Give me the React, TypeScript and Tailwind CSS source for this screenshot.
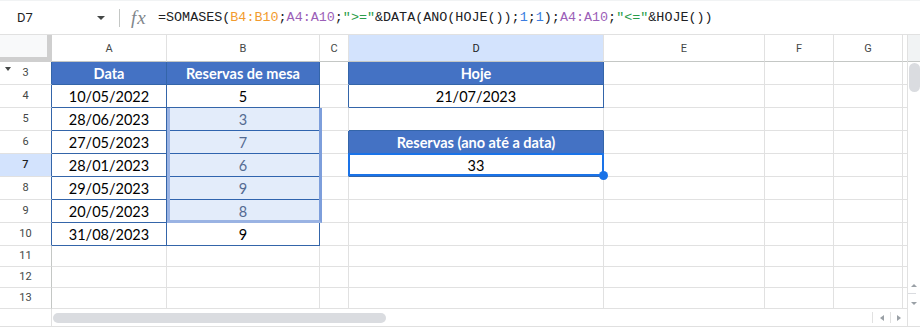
import React from "react";

const base = "flex items-center justify-center whitespace-nowrap overflow-hidden";
const TH = `${base} bg-[#4472c4] border-r border-b border-[#3465a9] text-white font-bold text-[14.5px] font-[Lato,sans-serif] pt-[2px]`;
const TD = `${base} bg-white border-r border-b border-[#3465a9] text-black text-[14.5px] font-[Lato,sans-serif] pt-[2px]`;
const TS = `${base} bg-white border-r border-b border-[#3465a9] text-[#5d6c88] text-[14.5px] font-[Lato,sans-serif] pt-[2px]`;
const G = "border-r border-b border-[#e1e1e1]";
const GR = "border-r border-b border-r-[#3465a9] border-b-[#e1e1e1]";
const GB = "border-r border-b border-r-[#e1e1e1] border-b-[#3465a9]";
const X = "border-b border-[#e1e1e1]";
const RH = `${base} relative bg-white border-r border-b border-r-[#3465a9] border-b-[#e1e1e1] text-[11px] text-[#444746] font-[Roboto,sans-serif]`;
const RHsel = `${base} bg-[#d3e3fd] border-r border-b border-r-[#3465a9] border-b-[#e1e1e1] text-[11px] text-[#1f1f1f] font-medium font-[Roboto,sans-serif]`;
const RHg = `${base} bg-white border-r border-b border-r-[#c4c7c5] border-b-[#e1e1e1] text-[11px] text-[#444746] font-[Roboto,sans-serif]`;
const CH = `${base} bg-white border-r border-b border-r-[#e1e1e1] border-b-[#c4c7c5] text-[11px] text-[#444746] font-[Roboto,sans-serif] pt-[2px]`;
const CHsel = `${base} bg-[#d3e3fd] border-r border-b border-r-[#e1e1e1] border-b-[#c4c7c5] text-[11px] text-[#1f1f1f] font-[Roboto,sans-serif] pt-[2px]`;

type Row = [string, React.ReactNode][];

const rows: Row[] = [
  [
    ["bg-[#f8f9fa] border-r-[5px] border-b-[5px] border-[#cfcfcf]", null],
    [CH, "A"],
    [CH, "B"],
    [CH, "C"],
    [CHsel, "D"],
    [CH, "E"],
    [CH, "F"],
    [CH, "G"],
    ["bg-white border-b border-[#c4c7c5]", null],
  ],
  [
    [
      RH,
      <>
        <svg className="absolute left-[5px] top-[5px]" width="6" height="4" viewBox="0 0 6 4">
          <polygon points="0,0 6,0 3,4" fill="#444746" />
        </svg>
        3
      </>,
    ],
    [TH, "Data"],
    [TH, "Reservas de mesa"],
    [GR, null],
    [TH, "Hoje"],
    [G, null],
    [G, null],
    [G, null],
    [X, null],
  ],
  [
    [RH, "4"],
    [TD, "10/05/2022"],
    [TD, "5"],
    [GR, null],
    [TD, "21/07/2023"],
    [G, null],
    [G, null],
    [G, null],
    [X, null],
  ],
  [
    [RH, "5"],
    [TD, "28/06/2023"],
    [TS, "3"],
    [G, null],
    [GB, null],
    [G, null],
    [G, null],
    [G, null],
    [X, null],
  ],
  [
    [RH, "6"],
    [TD, "27/05/2023"],
    [TS, "7"],
    [GR, null],
    [TH, "Reservas (ano até a data)"],
    [G, null],
    [G, null],
    [G, null],
    [X, null],
  ],
  [
    [RHsel, "7"],
    [TD, "28/01/2023"],
    [TS, "6"],
    [GR, null],
    [TD, "33"],
    [G, null],
    [G, null],
    [G, null],
    [X, null],
  ],
  [
    [RH, "8"],
    [TD, "29/05/2023"],
    [TS, "9"],
    [G, null],
    [G, null],
    [G, null],
    [G, null],
    [G, null],
    [X, null],
  ],
  [
    [RH, "9"],
    [TD, "20/05/2023"],
    [TS, "8"],
    [G, null],
    [G, null],
    [G, null],
    [G, null],
    [G, null],
    [X, null],
  ],
  [
    [RH, "10"],
    [TD, "31/08/2023"],
    [TD, "9"],
    [G, null],
    [G, null],
    [G, null],
    [G, null],
    [G, null],
    [X, null],
  ],
  ...["11", "12", "13"].map(
    (n): Row => [
      [RHg, n],
      [G, null],
      [G, null],
      [G, null],
      [G, null],
      [G, null],
      [G, null],
      [G, null],
      [X, null],
    ]
  ),
];

function FormulaBar() {
  return (
    <div className="h-[35px] flex items-center border-t border-t-[#f1f3f4] border-b border-b-[#e1e1e1] bg-white">
      <div className="w-[119px] h-full flex items-center justify-between pl-[17px] pr-[14px] pt-[1px]">
        <span className="text-[13px] text-[#1f1f1f] font-[Roboto,sans-serif]">D7</span>
        <svg width="8" height="4" viewBox="0 0 8 4">
          <polygon points="0,0 8,0 4,4" fill="#444746" />
        </svg>
      </div>
      <div className="w-px h-[18px] bg-[#c4c7c5]" />
      <span className="ml-[11px] w-[17px] text-[19px] leading-none italic text-[#80868b] font-['Liberation_Serif',serif] tracking-[1px]">
        fx
      </span>
      <div className="ml-[10px] pt-[1px] text-[13.4px] text-[#202124] font-['Liberation_Mono',monospace] whitespace-nowrap">
        <span>=SOMASES(</span>
        <span className="text-[#f29b2f]">B4:B10</span>
        <span>;</span>
        <span className="text-[#9c5fb8]">A4:A10</span>
        <span>;</span>
        <span className="text-[#2a9d4a]">{'">="'}</span>
        <span>&amp;DATA(ANO(HOJE());</span>
        <span className="text-[#3b7de0]">1</span>
        <span>;</span>
        <span className="text-[#3b7de0]">1</span>
        <span>);</span>
        <span className="text-[#9c5fb8]">A4:A10</span>
        <span>;</span>
        <span className="text-[#2a9d4a]">{'"<="'}</span>
        <span>&amp;HOJE())</span>
      </div>
    </div>
  );
}

function Grid() {
  return (
    <div className="relative h-[274px] grid grid-cols-[52px_115px_153px_29px_255px_161px_69px_69px_4px] grid-rows-[27px_repeat(8,23px)_repeat(3,21px)]">
      {rows.map((r, ri) =>
        r.map(([c, content], ci) => (
          <div key={`${ri}-${ci}`} className={c}>
            {content}
          </div>
        ))
      )}
      <div className="absolute left-[167px] top-[73px] w-[155px] h-[115px] bg-[rgba(26,95,214,0.12)] border-l-[3px] border-b-[3px] border-r-[3px] border-l-[#9ab3e3] border-b-[#9ab3e3] border-r-[#7d9edb] pointer-events-none" />
      <div className="absolute left-[348px] top-[118px] w-[256px] h-[23px] border-2 border-[#1a73e8] pointer-events-none" />
      <div className="absolute left-[599px] top-[136px] w-[9px] h-[9px] rounded-full bg-[#1a73e8]" />
    </div>
  );
}

function HScroll() {
  return (
    <div className="h-[17px] flex">
      <div className="w-[52px] border-r border-[#e1e1e1]" />
      <div className="mt-[4px] ml-[1px] w-[333px] h-[10px] rounded-full bg-[#dadce0]" />
      <div className="flex-1" />
      <div className="mt-[3px] h-[11px] w-[18px] border-l border-[#e1e1e1] flex items-center justify-center">
        <svg width="4" height="6" viewBox="0 0 4 6">
          <polygon points="4,0 4,6 0,3" fill="#9aa0a6" />
        </svg>
      </div>
      <div className="mt-[3px] h-[11px] w-[17px] border-l border-[#e1e1e1] flex items-center justify-center">
        <svg width="4" height="6" viewBox="0 0 4 6">
          <polygon points="0,0 0,6 4,3" fill="#9aa0a6" />
        </svg>
      </div>
    </div>
  );
}

function VScroll() {
  return (
    <div className="w-[13px] flex flex-col border-l border-[#e1e1e1]">
      <div className="h-[27px] bg-[#f1f3f4] border-b border-[#c4c7c5]" />
      <div className="flex-1 flex flex-col items-center bg-white">
        <div className="mt-[1px] w-[11px] h-[29px] rounded-full bg-[#dadce0]" />
        <div className="flex-1" />
        <div className="h-[16px] flex items-center justify-center">
          <svg width="6" height="3" viewBox="0 0 6 3">
            <polygon points="0,3 6,3 3,0" fill="#9aa0a6" />
          </svg>
        </div>
        <div className="h-px w-[8px] bg-[#dadce0] self-start" />
        <div className="h-[17px] flex items-start justify-center pt-[8px]">
          <svg width="6" height="3" viewBox="0 0 6 3">
            <polygon points="0,0 6,0 3,3" fill="#9aa0a6" />
          </svg>
        </div>
        <div className="h-[15px]" />
      </div>
    </div>
  );
}

export default function App() {
  return (
    <div className="w-[920px] h-[328px] overflow-hidden bg-white flex flex-col">
      <FormulaBar />
      <div className="h-[291px] flex">
        <div className="w-[907px] flex flex-col">
          <Grid />
          <HScroll />
        </div>
        <VScroll />
      </div>
      <div className="h-px bg-[#e0e0e0]" />
      <div className="h-px bg-white" />
    </div>
  );
}
